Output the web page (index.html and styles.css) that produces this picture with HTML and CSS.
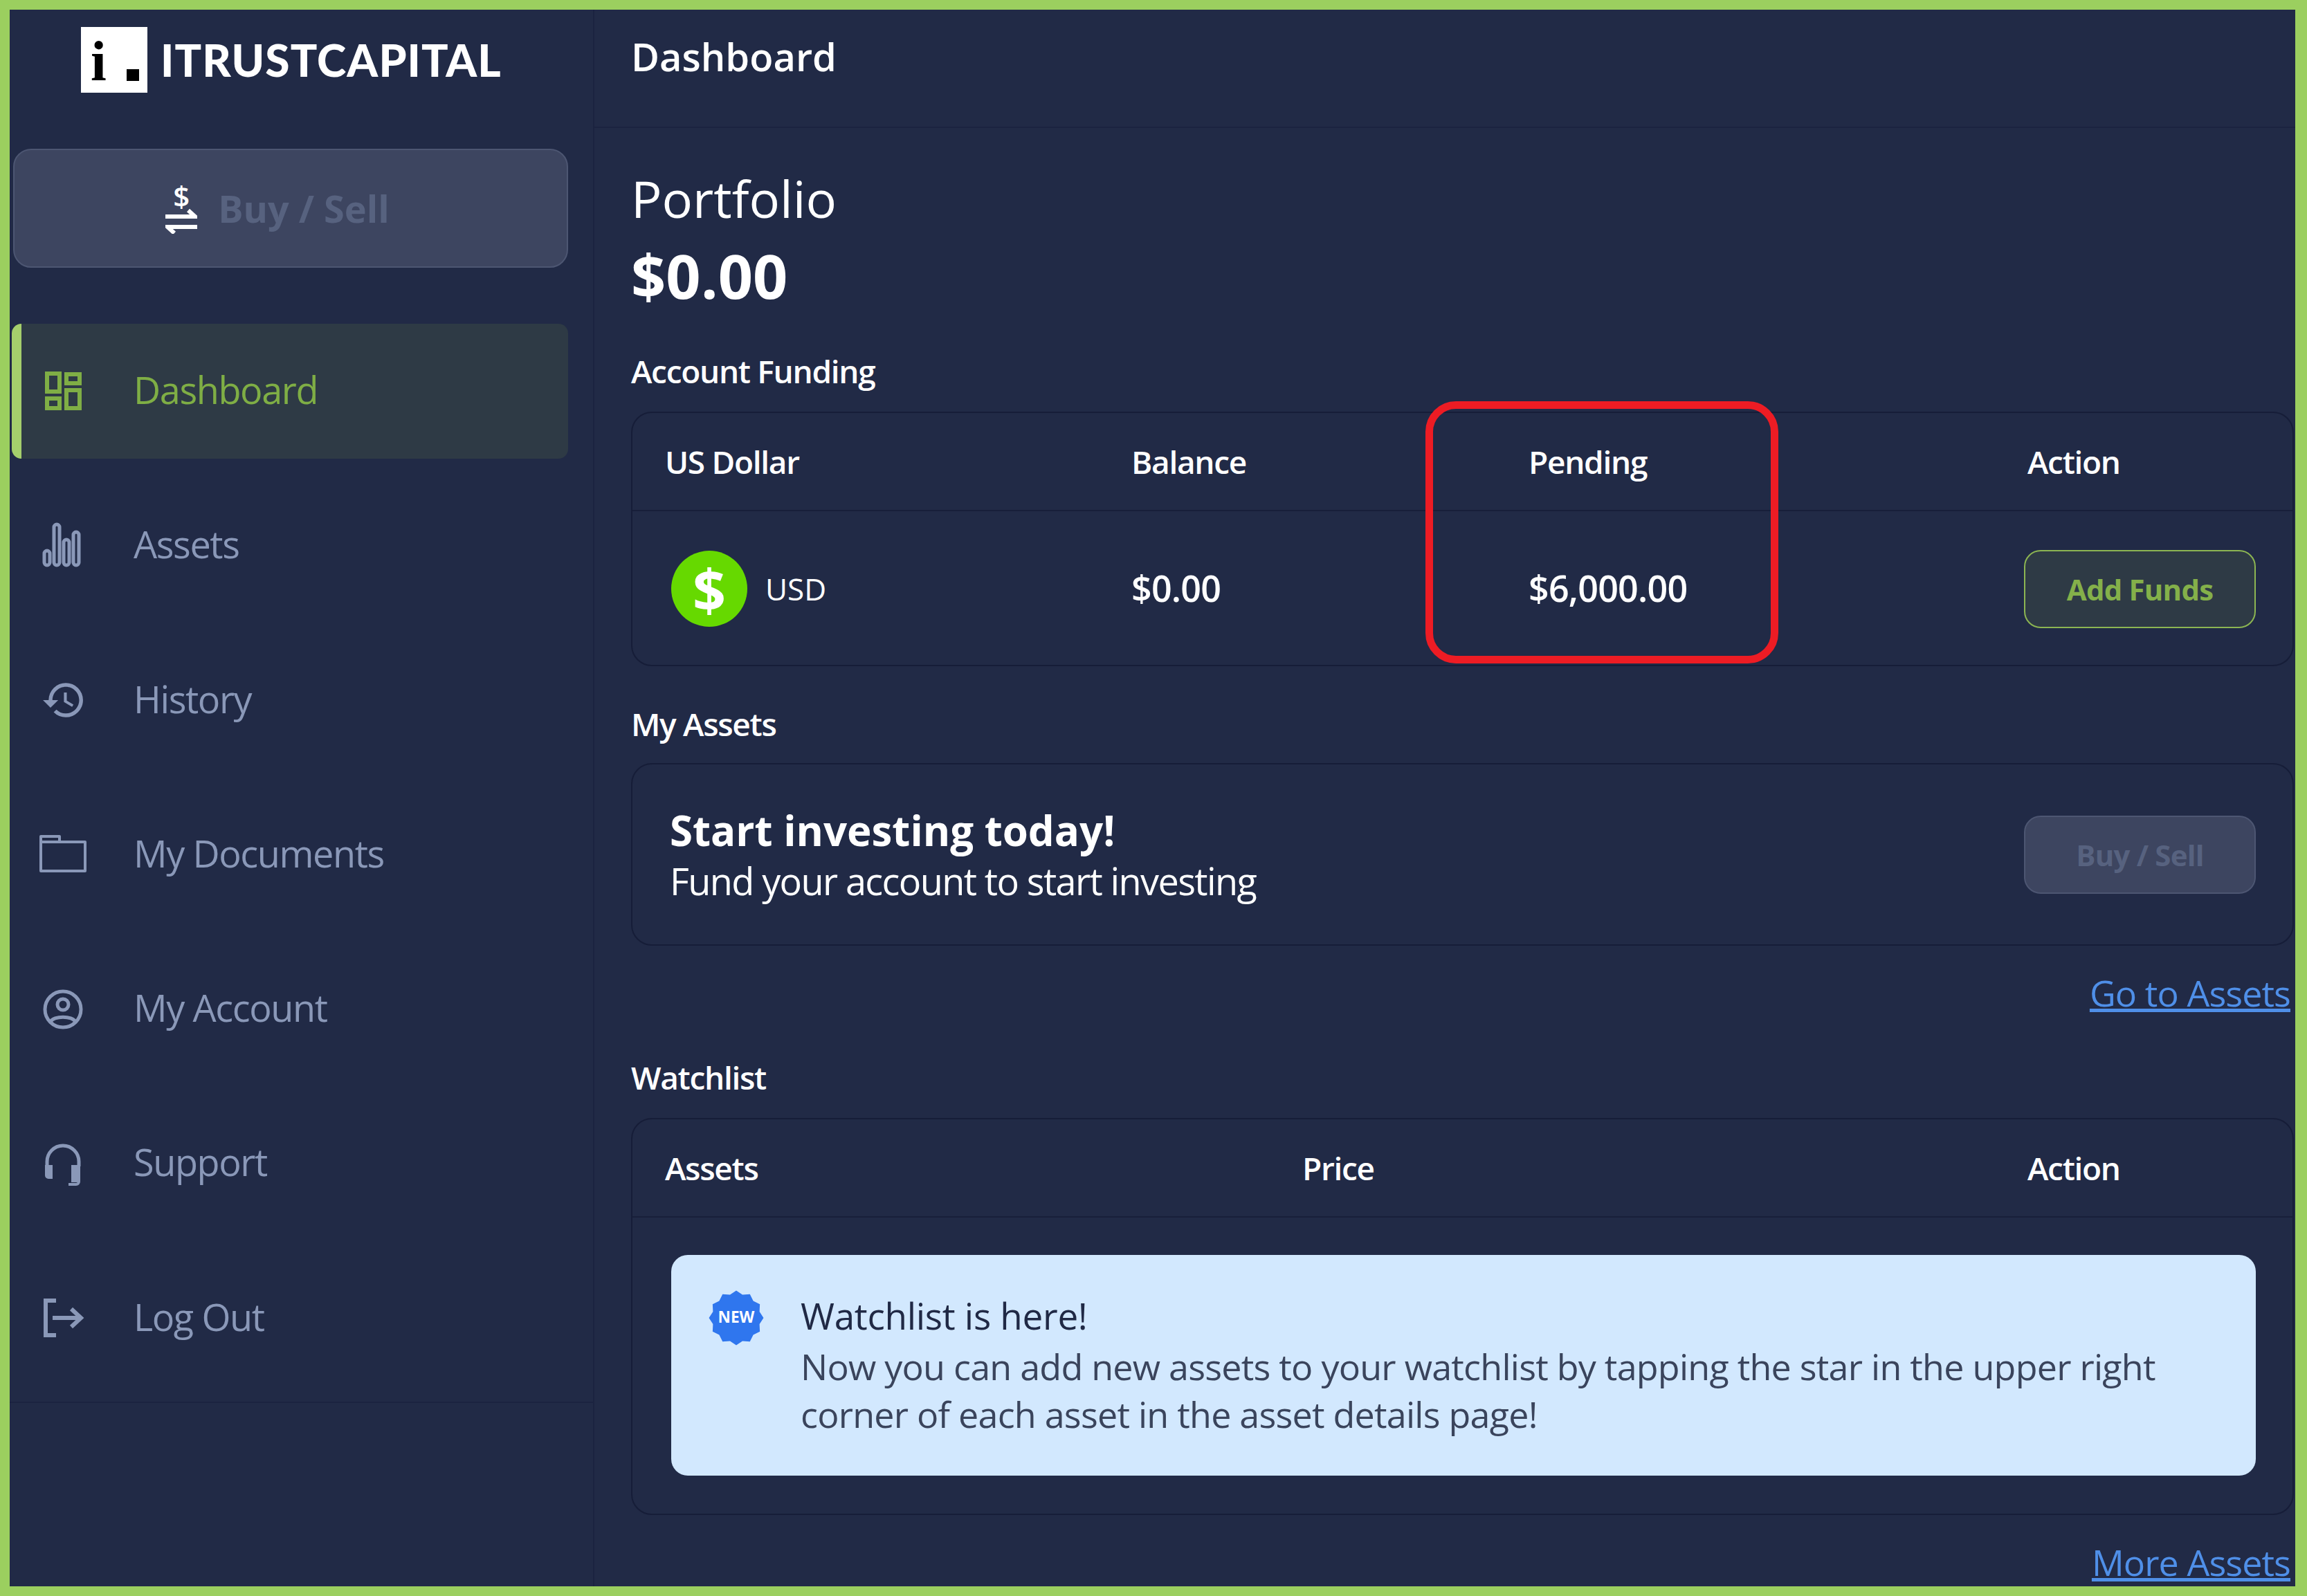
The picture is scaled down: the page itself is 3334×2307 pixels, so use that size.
FILE: index.html
```html
<!DOCTYPE html>
<html lang="en">
  <head>
    <meta charset="UTF-8" />
    <title>iTrustCapital | Dashboard</title>
    <link rel="stylesheet" href="styles.css">
  </head>
  <body>
    <aside class="sidebar">
      <div class="brand">
        <div class="brand--mark">
          <span class="brand--i">i</span>
          <span class="brand--dot"></span>
        </div>
        <span class="brand--name">ITRUSTCAPITAL</span>
      </div>

      <a class="trade--btn">
        <span class="trade--icon">
          <span class="trade--dollar">$</span>
          <svg width="46" height="36" viewBox="0 0 46 36" fill="none" stroke="#fff" stroke-width="6">
            <path d="M0 11H42M33 2l10 9-10 0" />
            <path d="M46 26H4M13 35L3 26h10" />
          </svg>
        </span>
        Buy / Sell
      </a>

      <nav class="nav">
        <a class="nav--item active">
          <svg class="nav--icon" viewBox="0 0 80 80" fill="none" stroke="currentColor" stroke-width="6">
            <rect x="17" y="14" width="18" height="26" />
            <rect x="45" y="15" width="19" height="13" />
            <rect x="17" y="50" width="18" height="14" />
            <rect x="45" y="38" width="19" height="26" />
          </svg>
          Dashboard
        </a>
        <a class="nav--item">
          <svg class="nav--icon" viewBox="0 0 80 80" fill="none" stroke="currentColor" stroke-width="5">
            <rect x="13" y="47" width="8" height="21" rx="4" />
            <rect x="27" y="9" width="8" height="59" rx="4" />
            <rect x="41" y="31" width="8" height="37" rx="4" />
            <rect x="55" y="20" width="8" height="48" rx="4" />
          </svg>
          Assets
        </a>
        <a class="nav--item">
          <svg class="nav--icon" viewBox="-3 -2.5 29 29" fill="currentColor">
            <path d="M13 3a9 9 0 0 0-9 9H1l3.89 3.89.07.14L9 12H6c0-3.87 3.13-7 7-7s7 3.13 7 7-3.13 7-7 7c-1.93 0-3.68-.79-4.94-2.06l-1.42 1.42A8.954 8.954 0 0 0 13 21a9 9 0 0 0 0-18zm-1 5v5l4.28 2.54.72-1.21-3.5-2.08V8H12z" />
          </svg>
          History
        </a>
        <a class="nav--item">
          <svg class="nav--icon" viewBox="0 0 80 80" fill="none" stroke="currentColor" stroke-width="4">
            <path d="M8 14h27v8H72v42H8z" stroke-linejoin="round" />
            <path d="M8 22h27" />
          </svg>
          My Documents
        </a>
        <a class="nav--item">
          <svg class="nav--icon" viewBox="0 0 80 80" fill="none" stroke="currentColor" stroke-width="5">
            <circle cx="40" cy="40" r="26" />
            <circle cx="40" cy="33" r="8" />
            <path d="M22 58c4-9 32-9 36 0" />
          </svg>
          My Account
        </a>
        <a class="nav--item">
          <svg class="nav--icon" viewBox="0 0 80 80" fill="none" stroke="currentColor" stroke-width="5">
            <path d="M17 44V37a23 23 0 0 1 46 0v7" />
            <path d="M14 42h11v20h-6a5 5 0 0 1-5-5zM52 42h13v21a4 4 0 0 1-4 4H52z" fill="currentColor" stroke="none" />
            <path d="M63 60v6a4 4 0 0 1-4 4H48" stroke-width="4" />
          </svg>
          Support
        </a>
        <a class="nav--item">
          <svg class="nav--icon" viewBox="0 0 80 80" fill="none" stroke="currentColor" stroke-width="6">
            <path d="M30 15H15v50h15" />
            <path d="M25 40h41M52 27l14 13-14 13" />
          </svg>
          Log Out
        </a>
      </nav>
    </aside>

    <main class="main">
      <header class="top--bar">Dashboard</header>

      <div class="content">
        <h1 class="portfolio--title">Portfolio</h1>
        <div class="portfolio--value">$0.00</div>

        <h2 class="section--title funding--title">Account Funding</h2>
        <section class="panel funding">
          <div class="row--head funding--cols">
            <span>US Dollar</span>
            <span>Balance</span>
            <span>Pending</span>
            <span>Action</span>
          </div>
          <div class="row--body funding--cols">
            <div class="currency">
              <span class="coin">$</span>
              <span>USD</span>
            </div>
            <span class="amount">$0.00</span>
            <span class="amount">$6,000.00</span>
            <a class="small--btn green">Add Funds</a>
          </div>
          <div class="highlight"></div>
        </section>

        <h2 class="section--title assets--title">My Assets</h2>
        <section class="panel start">
          <div>
            <div class="start--title">Start investing today!</div>
            <div class="start--text">Fund your account to start investing</div>
          </div>
          <a class="small--btn muted">Buy / Sell</a>
        </section>
        <a class="more--link">Go to Assets</a>

        <h2 class="section--title watch--title">Watchlist</h2>
        <section class="panel watchlist">
          <div class="row--head watch--cols">
            <span>Assets</span>
            <span>Price</span>
            <span>Action</span>
          </div>
          <div class="notice">
            <svg class="notice--badge" viewBox="0 0 80 80">
              <polygon fill="#2f76ee" points="78.5,40 72.8,31.2 73.3,20.75 64,16 59.25,6.7 48.8,7.2 40,1.5 31.2,7.2 20.75,6.7 16,16 6.7,20.75 7.2,31.2 1.5,40 7.2,48.8 6.7,59.25 16,64 20.75,73.3 31.2,72.8 40,78.5 48.8,72.8 59.25,73.3 64,64 73.3,59.25 72.8,48.8" />
              <text x="40" y="47" text-anchor="middle" class="notice--new">NEW</text>
            </svg>
            <div>
              <div class="notice--title">Watchlist is here!</div>
              <p class="notice--text">Now you can add new assets to your watchlist by tapping the star in the upper right corner of each asset in the asset details page!</p>
            </div>
          </div>
        </section>
        <a class="more--link more--last">More Assets</a>
      </div>
    </main>
  </body>
</html>
```

FILE: styles.css
```css
* {
  box-sizing: border-box;
  padding: 0;
  margin: 0;
}
body {
  display: grid;
  grid-template-columns: 845px minmax(0, 1fr);
  width: 3334px;
  height: 2307px;
  overflow: hidden;
  background-color: #212a46;
  border: solid #9bcf5f;
  border-width: 14px 17px 14px 14px;
  color: #fff;
  font-family: "Open Sans", sans-serif;
}

/* sidebar */
.sidebar {
  border-right: 2px solid #1b2340;
}
.brand {
  display: flex;
  align-items: center;
  gap: 19px;
  height: 201px;
  padding: 0 0 56px 103px;
}
.brand--mark {
  display: flex;
  align-items: flex-end;
  justify-content: space-between;
  width: 96px;
  height: 95px;
  padding: 0 12px 17px 14px;
  background-color: #fff;
}
.brand--i {
  color: #000;
  font-family: "Liberation Serif", serif;
  font-size: 82px;
  font-weight: 700;
  line-height: 56px;
}
.brand--dot {
  width: 18px;
  height: 17px;
  background-color: #000;
}
.brand--name {
  font-family: Lato, sans-serif;
  font-size: 64px;
  font-weight: 900;
  letter-spacing: 1.1px;
  line-height: 1;
}
.trade--btn {
  display: flex;
  align-items: center;
  justify-content: center;
  gap: 30px;
  width: 802px;
  height: 172px;
  margin-left: 5px;
  padding-right: 38px;
  background-color: #3d4560;
  border: 2px solid #4d5672;
  border-radius: 26px;
  color: #57627f;
  font-size: 54px;
  font-weight: 700;
}
.trade--icon {
  display: flex;
  flex-direction: column;
  align-items: center;
  color: #fff;
}
.trade--dollar {
  font-size: 42px;
  font-weight: 600;
  line-height: 38px;
}
.nav {
  display: flex;
  flex-direction: column;
  gap: 28.3px;
  margin-top: 81px;
  padding-bottom: 23px;
  border-bottom: 2px solid #1b2340;
}
.nav--item {
  display: flex;
  align-items: center;
  gap: 62px;
  width: 804px;
  height: 195px;
  margin-left: 3px;
  padding: 0 0 5px 20px;
  border-left: 14px solid transparent;
  border-radius: 14px;
  color: #8a98b8;
  font-size: 54px;
  font-weight: 500;
  letter-spacing: -1.4px;
}
.nav--item.active {
  background-color: #2e3a45;
  border-left-color: #a5cf6c;
  color: #7fae45;
}
.nav--icon {
  flex: none;
  width: 80px;
  height: 80px;
  margin-top: 5px;
}

/* main column */
.top--bar {
  display: flex;
  align-items: center;
  height: 171px;
  padding: 0 0 35px 53px;
  border-bottom: 2px solid #1b2340;
  font-size: 56px;
  font-weight: 600;
}
.content {
  padding: 52px 2px 0 53px;
}
.portfolio--title {
  font-size: 74px;
  font-weight: 400;
  line-height: 100px;
}
.portfolio--value {
  margin-top: 11px;
  font-size: 88px;
  font-weight: 700;
  line-height: 100px;
}
.section--title {
  padding-bottom: 2px;
  font-size: 46px;
  font-weight: 600;
  letter-spacing: -1.3px;
  line-height: 60px;
}
.funding--title {
  margin-top: 58px;
}
.assets--title {
  margin-top: 53px;
}
.watch--title {
  margin-top: 57px;
}
.panel {
  position: relative;
  margin-top: 27px;
  border: 2px solid #161d38;
  border-radius: 30px;
}
.funding {
  height: 368px;
}
.row--head {
  display: grid;
  align-items: center;
  height: 142px;
  padding-left: 47px;
  border-bottom: 2px solid #181f3a;
  font-size: 46px;
  font-weight: 600;
  letter-spacing: -1.3px;
}
.funding--cols {
  grid-template-columns: 674px 574px 721px minmax(0, 1fr);
}
.watch--cols {
  grid-template-columns: 921px 1048px 1fr;
}
.row--body {
  display: grid;
  align-items: center;
  height: 224px;
  padding: 0 53px 0 47px;
}
.currency {
  display: flex;
  align-items: center;
  gap: 26px;
  margin-left: 9px;
  font-size: 44px;
}
.coin {
  display: flex;
  align-items: center;
  justify-content: center;
  width: 110px;
  height: 110px;
  background-color: #66d900;
  border-radius: 50%;
  font-size: 84px;
  font-weight: 700;
}
.amount {
  padding-bottom: 4px;
  font-size: 52px;
  font-weight: 600;
  letter-spacing: -0.8px;
}
.small--btn {
  display: flex;
  align-items: center;
  justify-content: center;
  justify-self: end;
  flex: none;
  width: 335px;
  height: 113px;
  border: 2px solid;
  border-radius: 24px;
  font-size: 42px;
  font-weight: 700;
  letter-spacing: -0.8px;
}
.green {
  background-color: #2e3a45;
  border-color: #8cb552;
  color: #84b04a;
}
.muted {
  background-color: #3d4560;
  border-color: #4d5672;
  color: #57627f;
}
/* red marker drawn over the pending column */
.highlight {
  position: absolute;
  top: -17px;
  left: 1146px;
  width: 510px;
  height: 379px;
  border: 11px solid #ed1c24;
  border-radius: 44px;
}
.start {
  display: flex;
  align-items: center;
  justify-content: space-between;
  height: 264px;
  margin-top: 25px;
  padding: 0 53px 0 54px;
}
.start--title {
  font-size: 60px;
  font-weight: 700;
  line-height: 76px;
}
.start--text {
  font-size: 54px;
  letter-spacing: -1.6px;
  line-height: 70px;
}
.more--link {
  display: block;
  margin-top: 33px;
  padding-right: 5px;
  color: #4f8fe8;
  font-size: 52px;
  letter-spacing: -0.9px;
  line-height: 70px;
  text-align: right;
  text-decoration: underline;
}
.watchlist {
  height: 574px;
}
.notice {
  display: flex;
  align-items: flex-start;
  gap: 52px;
  height: 319px;
  margin: 54px 53px 0 56px;
  padding: 50px 40px 0 53px;
  background-color: #d2e8fe;
  border-radius: 24px;
  color: #202945;
}
.notice--badge {
  flex: none;
  width: 82px;
  height: 82px;
}
.notice--new {
  fill: #fff;
  font-size: 22px;
  font-weight: 700;
}
.notice--title {
  font-size: 53px;
  font-weight: 500;
  letter-spacing: -0.3px;
  line-height: 76px;
}
.notice--text {
  color: #3a445c;
  font-size: 52px;
  letter-spacing: -0.75px;
  line-height: 69px;
}
```
